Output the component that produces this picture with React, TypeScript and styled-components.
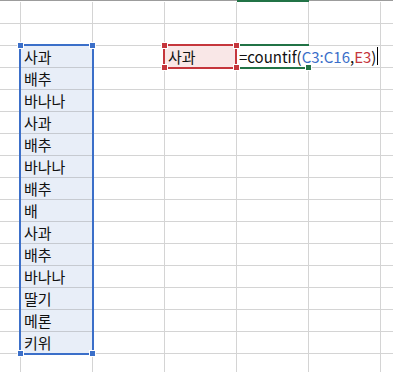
import React, { FC } from "react";
import styled, { createGlobalStyle, css } from "styled-components";

const GlobalStyle = createGlobalStyle`
  html, body {
    margin: 0;
    padding: 0;
    background: #ffffff;
    overflow: hidden;
  }
`;

type Tone = "plain" | "range" | "criteria" | "edit";

const COLUMNS = ["B", "C", "D", "E", "F", "G", "H"];
const ROWS = Array.from({ length: 17 }, (_, i) => i + 1);

const fruits = [
  "사과",
  "배추",
  "바나나",
  "사과",
  "배추",
  "바나나",
  "배추",
  "배",
  "사과",
  "배추",
  "바나나",
  "딸기",
  "메론",
  "키위"
];

const BLUE = "#3b6fc9";
const RED = "#c5363c";
const GREEN = "#217346";

const Sheet = styled.div`
  position: relative;
  width: 393px;
  height: 372px;
  overflow: hidden;
  font-family: "Noto Sans CJK KR", "Noto Sans", sans-serif;
  font-size: 15px;
  color: #111;
`;

const HeaderEdge = styled.div`
  display: grid;
  grid-template-columns: 237px 72px 1fr;
  height: 2px;
  border-top: 1px solid #9c9c9c;
  box-sizing: border-box;
`;

const HeaderMark = styled.div<{ $active?: boolean }>`
  ${({ $active }) =>
    $active &&
    css`
      margin-top: -1px;
      height: 2px;
      background: ${GREEN};
    `}
`;

const Grid = styled.div`
  display: grid;
  grid-template-columns: 21px repeat(6, 72px);
  grid-auto-rows: 22px;
`;

const toneStyles: Record<Tone, ReturnType<typeof css>> = {
  plain: css`
    background: #ffffff;
  `,
  range: css`
    background: #e8eef8;
    border-bottom-color: #c6cad1;
  `,
  criteria: css`
    background: #f9e7e7;
  `,
  edit: css`
    background: #ffffff;
  `
};

const Cell = styled.div<{ $tone: Tone }>`
  box-sizing: border-box;
  border-right: 1px solid #d4d4d4;
  border-bottom: 1px solid #d4d4d4;
  display: flex;
  align-items: flex-end;
  padding: 0 0 1px 3px;
  line-height: 19px;
  white-space: nowrap;
  ${({ $tone }) => toneStyles[$tone]}
`;

const Frame = styled.div<{
  $color: string;
  $left: number;
  $top: number;
  $width: number;
  $height: number;
  $openRight?: boolean;
}>`
  position: absolute;
  box-sizing: border-box;
  left: ${({ $left }) => $left}px;
  top: ${({ $top }) => $top}px;
  width: ${({ $width }) => $width}px;
  height: ${({ $height }) => $height}px;
  border: 2px solid ${({ $color }) => $color};
  ${({ $openRight }) =>
    $openRight &&
    css`
      border-right: none;
    `}
  pointer-events: none;
`;

const Handle = styled.div<{ $color: string; $x: number; $y: number }>`
  position: absolute;
  width: 5px;
  height: 5px;
  left: ${({ $x }) => $x - 2}px;
  top: ${({ $y }) => $y - 2}px;
  background: ${({ $color }) => $color};
  box-shadow: 0 0 0 1px #ffffff;
`;

const EditBox = styled.div`
  position: absolute;
  left: 237px;
  top: 46px;
  width: 141px;
  height: 21px;
  background: #ffffff;
  display: flex;
  align-items: flex-end;
  padding: 0 0 1px 2px;
  box-sizing: border-box;
  line-height: 19px;
  white-space: nowrap;
`;

const Ref = styled.span<{ $color: string }>`
  color: ${({ $color }) => $color};
`;

const Caret = styled.span`
  display: inline-block;
  align-self: center;
  width: 1px;
  height: 18px;
  margin-left: 1px;
  background: #000;
`;

const cellValue = (col: string, row: number): string => {
  if (col === "C" && row >= 3 && row <= 16) return fruits[row - 3];
  if (col === "E" && row === 3) return "사과";
  return "";
};

const cellTone = (col: string, row: number): Tone => {
  if (col === "C" && row >= 3 && row <= 16) return "range";
  if (col === "E" && row === 3) return "criteria";
  if (col === "F" && row === 3) return "edit";
  return "plain";
};

const corners = (x1: number, y1: number, x2: number, y2: number) => [
  [x1, y1],
  [x2, y1],
  [x1, y2],
  [x2, y2]
];

const App: FC = () => {
  return (
    <Sheet>
      <GlobalStyle />
      <HeaderEdge>
        <HeaderMark />
        <HeaderMark $active />
        <HeaderMark />
      </HeaderEdge>
      <Grid>
        {ROWS.map((row) =>
          COLUMNS.map((col) => (
            <Cell key={`${col}${row}`} $tone={cellTone(col, row)}>
              {cellValue(col, row)}
            </Cell>
          ))
        )}
      </Grid>

      <Frame $color={BLUE} $left={19} $top={44} $width={75} $height={311} />
      {corners(20, 45, 92, 353).map(([x, y]) => (
        <Handle key={`b${x}-${y}`} $color={BLUE} $x={x} $y={y} />
      ))}

      <Frame $color={GREEN} $left={237} $top={44} $width={72} $height={25} $openRight />
      <EditBox>
        =countif(<Ref $color={BLUE}>C3:C16</Ref>,<Ref $color={RED}>E3</Ref>)
        <Caret />
      </EditBox>
      <Handle $color={GREEN} $x={308} $y={67} />

      <Frame $color={RED} $left={163} $top={44} $width={74} $height={25} />
      {corners(164, 45, 236, 67).map(([x, y]) => (
        <Handle key={`r${x}-${y}`} $color={RED} $x={x} $y={y} />
      ))}
    </Sheet>
  );
};

export default App;
